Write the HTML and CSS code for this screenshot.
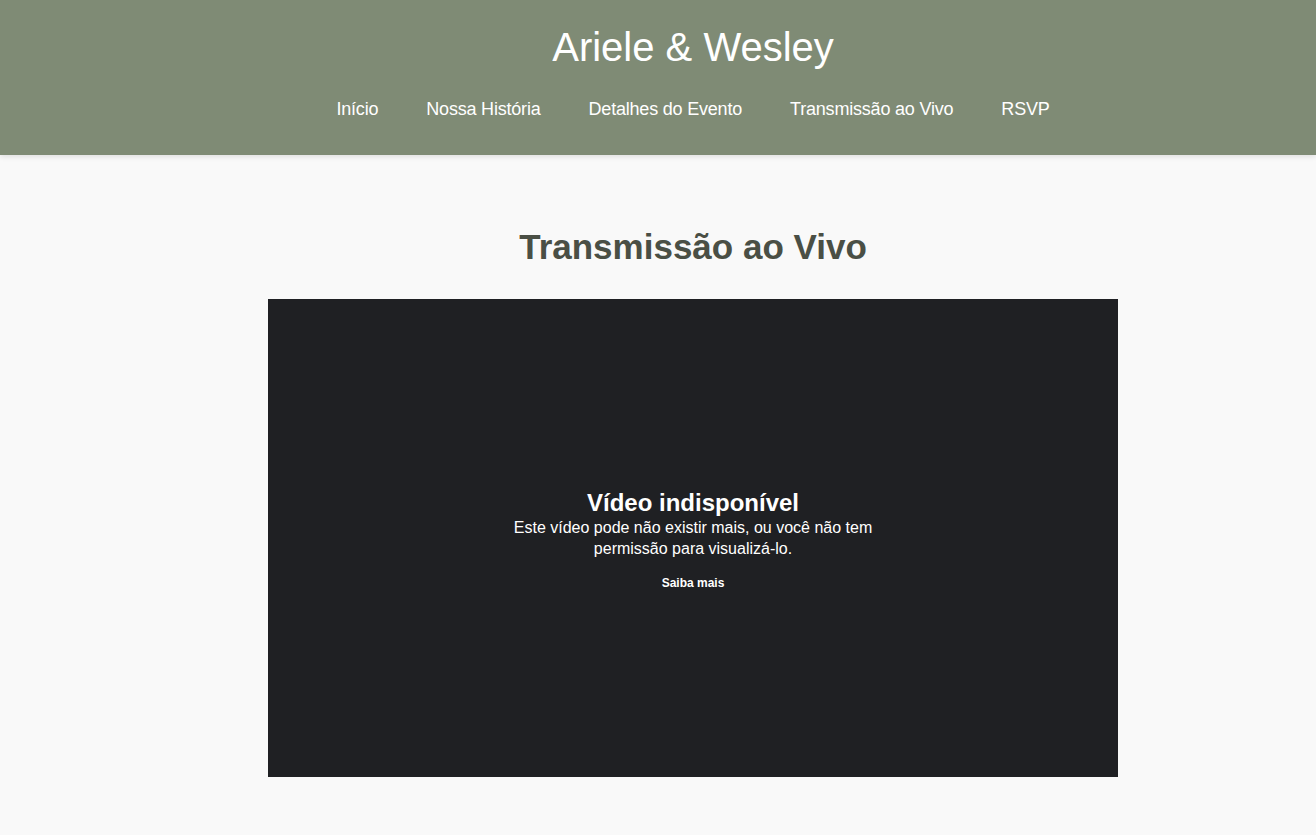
FILE: index.html
```html
<!DOCTYPE html>
<html lang="pt-BR">
<head>
<meta charset="utf-8">
<title>Ariele &amp; Wesley</title>
<link rel="stylesheet" href="styles.css">
</head>
<body>
<header class="site-header">
  <div class="inner">
    <h1 class="brand">Ariele &amp; Wesley</h1>
    <nav class="nav">
      <a href="#">Início</a>
      <a href="#">Nossa História</a>
      <a href="#">Detalhes do Evento</a>
      <a href="#">Transmissão ao Vivo</a>
      <a href="#">RSVP</a>
    </nav>
  </div>
</header>
<main class="main">
  <section class="live">
    <h2 class="section-title">Transmissão ao Vivo</h2>
    <div class="video">
      <div class="video-msg">
        <div class="video-title">Vídeo indisponível</div>
        <div class="video-text">Este vídeo pode não existir mais, ou você não tem permissão para visualizá-lo.</div>
        <a class="video-link" href="#">Saiba mais</a>
      </div>
    </div>
  </section>
</main>
</body>
</html>
```
FILE: styles.css
```css
* { box-sizing: border-box; }
html, body { margin: 0; padding: 0; }
body {
  background: #f9f9f9;
  font-family: "Liberation Sans", Arial, sans-serif;
  color: #333;
  overflow: hidden;
}
.site-header {
  background: #7f8b75;
  box-shadow: 0 2px 5px rgba(0,0,0,0.1);
  position: relative;
  height: 155px;
  padding-left: 70px;
}
.inner {
  display: flex;
  flex-direction: column;
  align-items: center;
  padding-top: 24px;
}
.brand {
  margin: 0;
  font-size: 40px;
  font-weight: 400;
  color: #fff;
  line-height: 46px;
}
.nav {
  display: flex;
  gap: 48px;
  margin-top: 28px;
}
.nav a {
  color: #fff;
  text-decoration: none;
  font-size: 18px;
  line-height: 22px;
  letter-spacing: -0.2px;
}
.main {
  padding-left: 70px;
}
.live {
  display: flex;
  flex-direction: column;
  align-items: center;
  padding-top: 71px;
}
.section-title {
  margin: 0;
  font-size: 35px;
  font-weight: 700;
  color: #4a4f45;
  line-height: 42px;
  height: 42px;
}
.video {
  margin-top: 31px;
  width: 850px;
  height: 478px;
  background: #1f2023;
  display: flex;
  align-items: center;
  justify-content: center;
}
.video-msg {
  width: 380px;
  text-align: center;
  color: #fff;
  margin-top: 3px;
}
.video-title {
  font-size: 24px;
  font-weight: 700;
  line-height: 28px;
}
.video-text {
  font-size: 16px;
  line-height: 21px;
  margin-top: 0;
}
.video-link {
  display: inline-block;
  margin-top: 17px;
  color: #fff;
  font-size: 12px;
  font-weight: 700;
  text-decoration: none;
}
```
